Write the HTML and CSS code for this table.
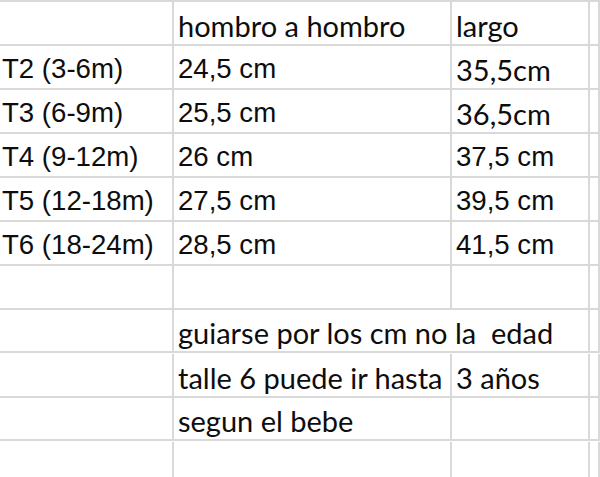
FILE: index.html
```html
<!DOCTYPE html>
<html>
<head>
<meta charset="utf-8">
<link rel="stylesheet" href="styles.css">
</head>
<body>
<div class="sheet">
  <div class="c"></div><div class="c ap">hombro a hombro</div><div class="c ap">largo</div><div class="c"></div>
  <div class="c ar c1">T2 (3-6m)</div><div class="c ar">24,5 cm</div><div class="c ap">35,5cm</div><div class="c"></div>
  <div class="c ar c1">T3 (6-9m)</div><div class="c ar">25,5 cm</div><div class="c ap">36,5cm</div><div class="c"></div>
  <div class="c ar c1">T4 (9-12m)</div><div class="c ar">26 cm</div><div class="c ar">37,5 cm</div><div class="c"></div>
  <div class="c ar c1">T5 (12-18m)</div><div class="c ar">27,5 cm</div><div class="c ar">39,5 cm</div><div class="c"></div>
  <div class="c ar c1">T6 (18-24m)</div><div class="c ar">28,5 cm</div><div class="c ar">41,5 cm</div><div class="c"></div>
  <div class="c"></div><div class="c"></div><div class="c"></div><div class="c"></div>
  <div class="c short"></div><div class="c ap span2 short">guiarse por los cm no la&nbsp; edad</div><div class="c short"></div>
  <div class="c"></div><div class="c ap">talle 6 puede ir hasta</div><div class="c ap">3 años</div><div class="c"></div>
  <div class="c short"></div><div class="c ap short">segun el bebe</div><div class="c short"></div><div class="c short"></div>
  <div class="c"></div><div class="c"></div><div class="c"></div><div class="c"></div>
</div>
</body>
</html>
```
FILE: styles.css
```css
html, body {
  margin: 0;
  padding: 0;
  background: #ffffff;
}
body {
  width: 600px;
  height: 477px;
  overflow: hidden;
}
.sheet {
  display: grid;
  grid-template-columns: 174px 278px 138px 10px;
  grid-auto-rows: 44px;
  border-top: 2px solid #d9d9d9;
  color: #0d0d0d;
}
.c {
  box-sizing: border-box;
  border-right: 2px solid #d9d9d9;
  border-bottom: 2px solid #d9d9d9;
  display: flex;
  align-items: flex-end;
  padding-left: 4px;
  white-space: nowrap;
  line-height: 1;
}
.c1 {
  padding-left: 2px;
}
.short {
  height: 43px;
}
.span2 {
  grid-column: span 2;
}
.ar {
  font-family: "Liberation Sans", Arial, sans-serif;
  font-size: 27.6px;
  padding-bottom: 5px;
}
.ap {
  font-family: Lato, "Noto Sans", sans-serif;
  font-size: 29px;
  padding-bottom: 4px;
}
```
